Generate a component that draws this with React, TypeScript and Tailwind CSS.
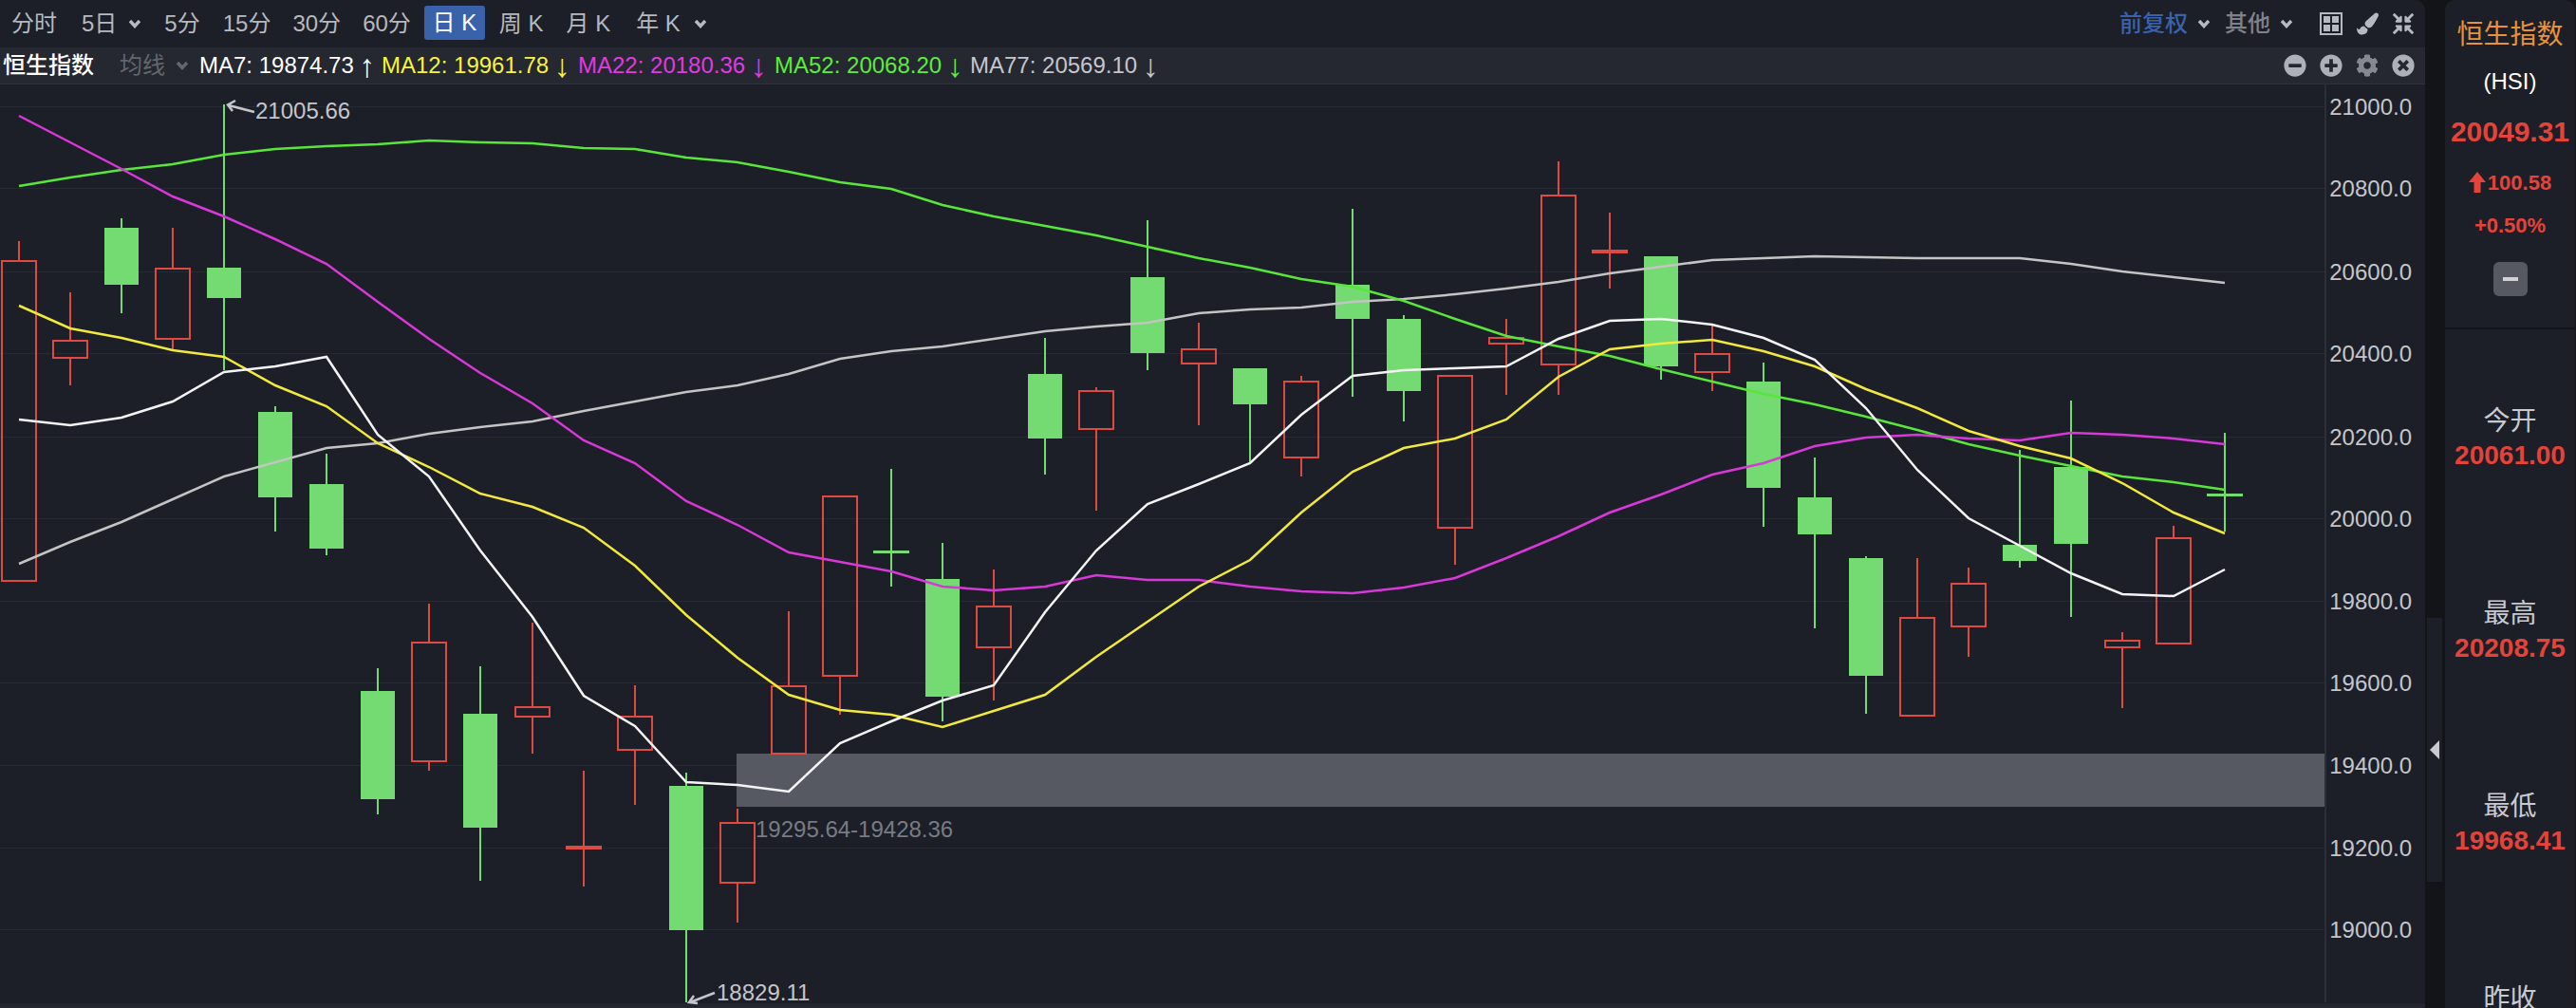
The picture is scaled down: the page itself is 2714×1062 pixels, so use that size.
import { FaCog, FaCompressArrowsAlt, FaMinusCircle, FaPaintBrush, FaPlusCircle, FaTimesCircle } from 'react-icons/fa';

const RED = '#dc4a42';
const GREEN = '#74da72';

// kind, wick top, body top, body bottom, wick bottom
type Candle = ['r' | 'g', number, number, number, number];

const candles: Candle[] = [
  ['r', 254, 275, 612, 612], ['r', 308, 359, 377, 406], ['g', 230, 240, 300, 330], ['r', 240, 283, 357, 368],
  ['g', 110, 282, 314, 390], ['g', 428, 434, 524, 560], ['g', 478, 510, 578, 585], ['g', 704, 728, 842, 858],
  ['r', 636, 677, 802, 812], ['g', 702, 752, 872, 928], ['r', 656, 745, 755, 794], ['r', 812, 893, 893, 934],
  ['r', 722, 755, 790, 848], ['g', 814, 828, 980, 1056], ['r', 852, 867, 930, 972], ['r', 644, 723, 794, 794],
  ['r', 523, 523, 712, 753], ['g', 494, 582, 582, 618], ['g', 572, 610, 734, 760], ['r', 600, 639, 682, 738],
  ['g', 356, 394, 462, 500], ['r', 408, 412, 452, 538], ['g', 232, 292, 372, 390], ['r', 340, 368, 383, 448],
  ['g', 388, 388, 426, 488], ['r', 396, 402, 482, 502], ['g', 220, 300, 336, 418], ['g', 332, 336, 412, 444],
  ['r', 396, 396, 556, 595], ['r', 336, 356, 362, 416], ['r', 170, 206, 384, 416], ['r', 224, 265, 265, 304],
  ['g', 270, 270, 386, 400], ['r', 342, 373, 392, 412], ['g', 382, 402, 514, 555], ['g', 482, 524, 563, 662],
  ['g', 586, 588, 712, 752], ['r', 588, 651, 754, 754], ['r', 598, 615, 660, 692], ['g', 474, 574, 591, 598],
  ['g', 422, 492, 573, 650], ['r', 666, 675, 682, 746], ['r', 554, 567, 678, 678], ['g', 456, 522, 522, 560],
];

const ma7 = [442, 448, 440, 423, 392, 386, 376, 458, 502, 580, 650, 733, 765, 824, 827, 834, 783, 760, 738, 722, 645, 580, 531, 510, 488, 437, 396, 390, 388, 386, 357, 338, 336, 342, 356, 379, 430, 495, 546, 575, 604, 626, 628, 600];
const ma12 = [322, 346, 356, 369, 376, 406, 428, 467, 492, 520, 534, 556, 596, 648, 693, 732, 748, 753, 766, 749, 732, 692, 655, 618, 590, 540, 497, 472, 462, 442, 397, 368, 362, 358, 370, 386, 410, 430, 454, 470, 483, 509, 540, 562];
const ma22 = [122, 150, 178, 207, 228, 252, 278, 318, 357, 393, 425, 464, 488, 528, 553, 582, 592, 602, 618, 622, 618, 606, 611, 611, 618, 623, 625, 619, 609, 588, 565, 540, 521, 500, 488, 470, 461, 458, 462, 464, 456, 458, 462, 468];
const ma52 = [196, 187, 179, 173, 163, 157, 154, 152, 148, 150, 151, 156, 157, 166, 171, 181, 192, 199, 216, 228, 238, 248, 260, 272, 282, 294, 302, 317, 336, 354, 365, 375, 389, 402, 415, 426, 439, 453, 468, 480, 491, 502, 508, 516];
const ma77 = [594, 571, 550, 526, 502, 487, 472, 467, 457, 450, 444, 433, 423, 413, 406, 394, 378, 370, 365, 357, 349, 344, 340, 330, 326, 324, 318, 315, 310, 304, 297, 288, 281, 274, 272, 270, 271, 272, 272, 272, 278, 286, 292, 298];

const gridLines: [string, number][] = [
  ['21000.0', 112], ['20800.0', 198], ['20600.0', 286], ['20400.0', 372], ['20200.0', 460], ['20000.0', 546],
  ['19800.0', 633], ['19600.0', 719], ['19400.0', 806], ['19200.0', 893], ['19000.0', 979],
];

const candleX = (i: number) => Math.round(20 + 54.05 * i);
const linePoints = (ys: number[]) => ys.map((y, i) => `${candleX(i)},${y}`).join(' ');

function Chevron() {
  return (
    <svg className="block" width="14" height="10" viewBox="0 0 14 10">
      <path d="M2 2 L7 7.5 L12 2" fill="none" stroke="currentColor" strokeWidth="3.4" />
    </svg>
  );
}

function CandleShape({ c, i }: { c: Candle; i: number }) {
  const [kind, wickTop, top, bottom, wickBottom] = c;
  const x = candleX(i);
  const color = kind === 'r' ? RED : GREEN;
  if (top === bottom) {
    return (
      <g>
        <rect x={x - 1} y={wickTop} width={2} height={wickBottom - wickTop} fill={color} />
        <rect x={x - 19} y={top - 2} width={38} height={kind === 'r' ? 4 : 3} fill={color} />
      </g>
    );
  }
  if (kind === 'g') {
    return (
      <g>
        <rect x={x - 1} y={wickTop} width={2} height={wickBottom - wickTop} fill={color} />
        <rect x={x - 18} y={top} width={36} height={bottom - top} fill={color} />
      </g>
    );
  }
  return (
    <g>
      <rect x={x - 1} y={wickTop} width={2} height={top - wickTop} fill={color} />
      <rect x={x - 1} y={bottom} width={2} height={wickBottom - bottom} fill={color} />
      <rect x={x - 18} y={top} width={36} height={bottom - top} fill="none" stroke={color} strokeWidth={2} />
    </g>
  );
}

function Chart() {
  return (
    <svg className="block w-[2555px] h-[973px]" viewBox="0 89 2555 973" fontFamily="'Liberation Sans', sans-serif" fontSize={24}>
      <g shapeRendering="crispEdges">
        {gridLines.map(([label, y]) => (
          <rect key={label} x={0} y={y} width={2449} height={1} fill="#272a32" />
        ))}
        <rect x={776} y={794} width={1673} height={56} fill="#565962" />
        <rect x={2449} y={89} width={2} height={967} fill="#2c2f37" />
        <rect x={0} y={1057} width={2555} height={5} fill="#23262e" />
        {candles.map((c, i) => (
          <CandleShape key={i} c={c} i={i} />
        ))}
      </g>
      <g fill="none" strokeWidth={2.5}>
        <polyline points={linePoints(ma77)} stroke="#c4c4c4" />
        <polyline points={linePoints(ma52)} stroke="#59e63a" />
        <polyline points={linePoints(ma22)} stroke="#d838d8" />
        <polyline points={linePoints(ma12)} stroke="#f2e93c" />
        <polyline points={linePoints(ma7)} stroke="#f4f4f4" />
      </g>
      <g fill="#c4c6cc">
        {gridLines.map(([label, y]) => (
          <text key={label} x={2541} y={y + 8.5} textAnchor="end">{label}</text>
        ))}
        <text x={269} y={124.5}>21005.66</text>
        <text x={755} y={1053.5}>18829.11</text>
      </g>
      <text x={796} y={881.5} fill="#797b82">19295.64-19428.36</text>
      <g fill="none" stroke="#c4c6cc" strokeWidth={2.5}>
        <path d="M268 118 L241 111 M248 106 L240 110.5 L245 117" />
        <path d="M753 1046 L727 1056 M735 1057 L726 1056 L731 1049" />
      </g>
    </svg>
  );
}

function MaItem({ label, arrow, color, width }: { label: string; arrow: string; color: string; width: string }) {
  return (
    <div className={`flex items-center ${width}`} style={{ color }}>
      <span>{label}</span>
      <span className="w-[28px] text-center text-[34px] leading-[34px]">{arrow}</span>
    </div>
  );
}

function StatBlock({ label, value }: { label: string; value: string }) {
  return (
    <div className="flex flex-col items-center mb-[131px]">
      <div className="h-[36px] leading-[36px] text-[28px] text-[#c8cad0]">{label}</div>
      <div className="h-[36px] leading-[36px] text-[28px] font-bold text-[#e4433a]">{value}</div>
    </div>
  );
}

export default function App() {
  return (
    <div className="flex w-[2714px] h-[1062px] overflow-hidden bg-[#131417] font-['Liberation_Sans','Noto_Sans_CJK_SC',sans-serif]">
      <div className="w-[2555px] h-full flex flex-col bg-[#1c1f27] rounded-tr-[10px] overflow-hidden text-[24px]">
        <div className="h-[50px] shrink-0 flex items-center text-[#b6b9bf]">
          <span className="ml-[12px]">分时</span>
          <span className="ml-[26px]">5日</span>
          <span className="ml-[12px]"><Chevron /></span>
          <span className="ml-[24px]">5分</span>
          <span className="ml-[24px]">15分</span>
          <span className="ml-[23px]">30分</span>
          <span className="ml-[23px]">60分</span>
          <span className="ml-[14px] mt-[-2px] w-[64px] h-[36px] leading-[36px] text-center rounded-[3px] bg-[#3a62ab] text-white">日 K</span>
          <span className="ml-[15px]">周 K</span>
          <span className="ml-[24px]">月 K</span>
          <span className="ml-[27px]">年 K</span>
          <span className="ml-[14px]"><Chevron /></span>
          <span className="ml-auto font-medium text-[#3a62ab]">前复权</span>
          <span className="ml-[10px] text-[#b6b9bf]"><Chevron /></span>
          <span className="ml-[15px] font-medium text-[#7f828a]">其他</span>
          <span className="ml-[10px]"><Chevron /></span>
          <div className="ml-[28px] w-[24px] h-[24px] border-2 border-[#b6b9bf] grid grid-cols-2 gap-[2px] p-[2px]">
            <span className="bg-[#b6b9bf]" />
            <span className="bg-[#b6b9bf]" />
            <span className="bg-[#b6b9bf]" />
            <span className="bg-[#b6b9bf]" />
          </div>
          <FaPaintBrush className="ml-[15px] w-[23px] h-[24px]" />
          <FaCompressArrowsAlt className="ml-[15px] mr-[12px] w-[22px] h-[22px]" />
        </div>
        <div className="h-[39px] shrink-0 flex items-center bg-[#252831] border-b border-[#2e3139] text-white">
          <span className="ml-[3px] font-medium">恒生指数</span>
          <span className="ml-[27px] text-[#63666d]">均线</span>
          <span className="ml-[11px] text-[#63666d]"><Chevron /></span>
          <div className="ml-[11px] flex items-center">
            <MaItem label="MA7: 19874.73" arrow="↑" color="#ffffff" width="w-[192px]" />
            <MaItem label="MA12: 19961.78" arrow="↓" color="#f8f23c" width="w-[207px]" />
            <MaItem label="MA22: 20180.36" arrow="↓" color="#e03ae0" width="w-[207px]" />
            <MaItem label="MA52: 20068.20" arrow="↓" color="#5cec3c" width="w-[206px]" />
            <MaItem label="MA77: 20569.10" arrow="↓" color="#c4c6cc" width="w-[206px]" />
          </div>
          <div className="ml-auto mr-[11px] flex items-center gap-[14px] text-[#adb0b6]">
            <FaMinusCircle className="w-[24px] h-[24px]" />
            <FaPlusCircle className="w-[24px] h-[24px]" />
            <FaCog className="w-[24px] h-[24px] text-[#85888f]" />
            <FaTimesCircle className="w-[24px] h-[24px]" />
          </div>
        </div>
        <Chart />
      </div>

      <div className="w-[21px] h-full relative">
        <div className="absolute top-[651px] left-[2px] w-[16px] h-[278px] bg-[#1c1f27] flex items-center justify-center">
          <svg width="10" height="20" viewBox="0 0 10 20"><path d="M10 0 L0 10 L10 20 Z" fill="#c8cad0" /></svg>
        </div>
      </div>

      <div className="w-[137px] h-full flex flex-col mr-px">
        <div className="h-[345px] shrink-0 flex flex-col items-center bg-[#1c1f27] rounded-t-[10px] pt-[17px]">
          <div className="h-[40px] leading-[40px] text-[28px] text-[#e8923a]">恒生指数</div>
          <div className="mt-[13px] h-[32px] leading-[32px] text-[24px] text-white">(HSI)</div>
          <div className="mt-[19px] h-[36px] leading-[36px] text-[30px] font-bold text-[#e4433a]">20049.31</div>
          <div className="mt-[20px] h-[30px] flex items-center text-[22px] font-bold text-[#e4433a]">
            <svg className="mr-[2px]" width="18" height="22" viewBox="0 0 18 22"><path d="M9 0 L18 11 L12.5 11 L12.5 22 L5.5 22 L5.5 11 L0 11 Z" fill="#e4433a" /></svg>
            100.58
          </div>
          <div className="mt-[16px] h-[30px] leading-[30px] text-[22px] font-bold text-[#e4433a]">+0.50%</div>
          <div className="mt-[23px] w-[36px] h-[36px] rounded-[6px] bg-[#565962] flex items-center justify-center">
            <span className="w-[16px] h-[4px] bg-[#d0d2d6]" />
          </div>
        </div>
        <div className="flex-1 mt-[2px] bg-[#1c1f27] pt-[79px] overflow-hidden">
          <StatBlock label="今开" value="20061.00" />
          <StatBlock label="最高" value="20208.75" />
          <StatBlock label="最低" value="19968.41" />
          <div className="flex flex-col items-center">
            <div className="h-[36px] leading-[36px] text-[28px] text-[#c8cad0]">昨收</div>
          </div>
        </div>
      </div>
    </div>
  );
}
